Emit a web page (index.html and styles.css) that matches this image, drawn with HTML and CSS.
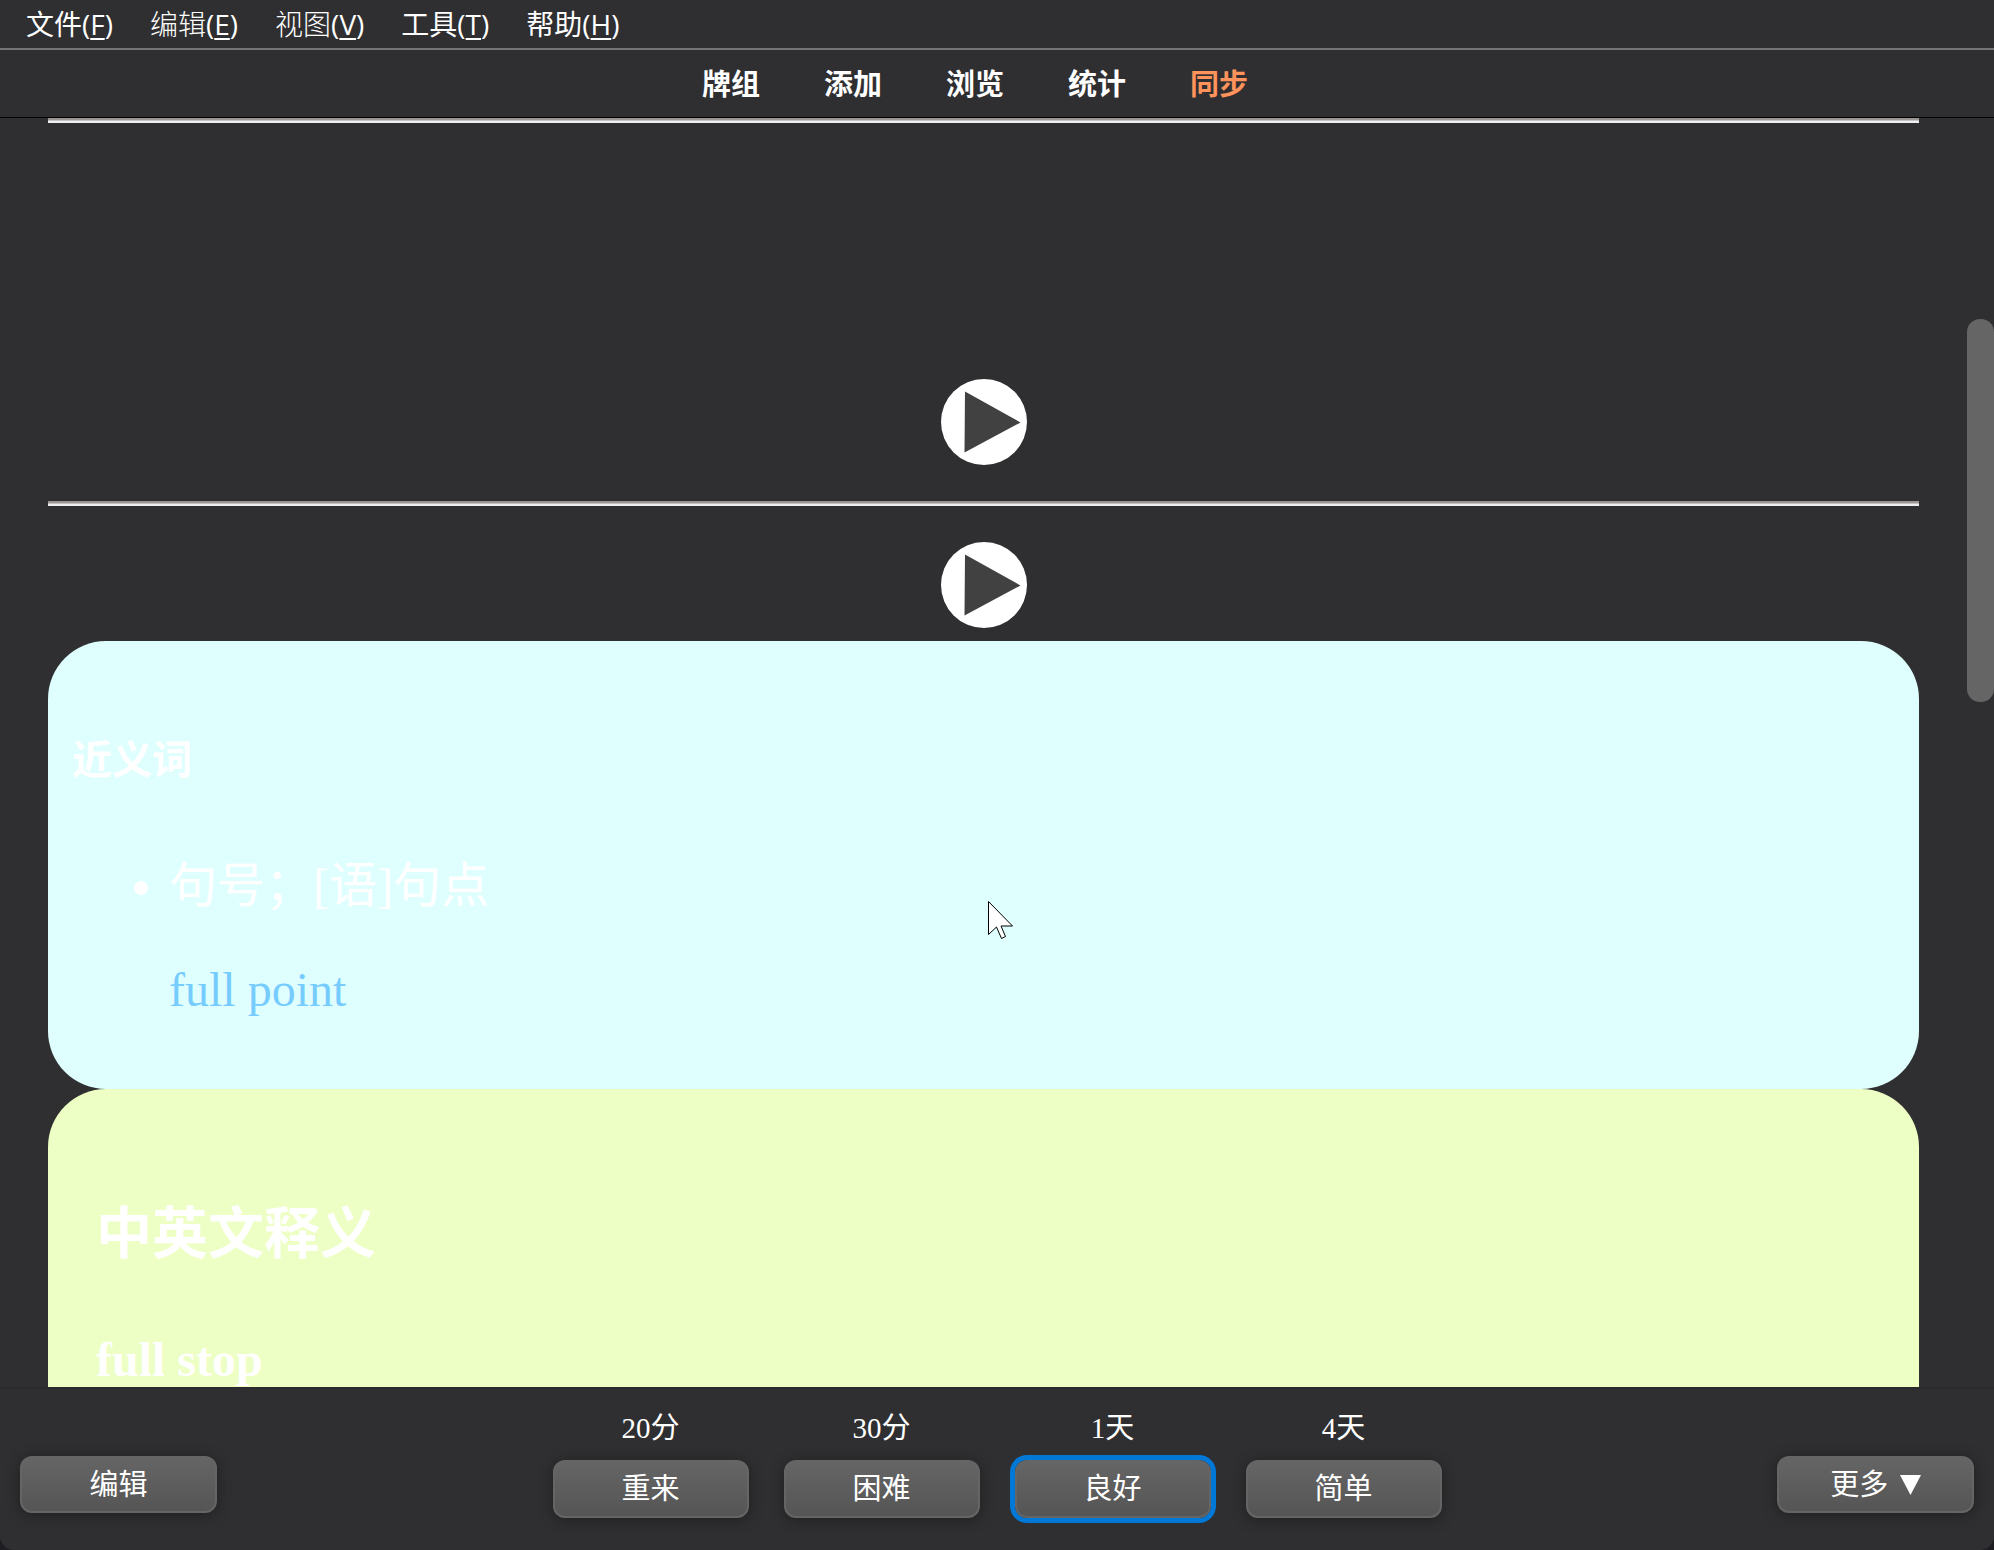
FILE: index.html
```html
<!DOCTYPE html>
<html lang="zh-CN">
<head>
<meta charset="utf-8">
<title>Anki</title>
<link rel="stylesheet" href="styles.css">
</head>
<body>
<div class="app">
  <nav class="menubar">
    <button type="button" class="menu">文件(<u>F</u>)</button>
    <button type="button" class="menu"><span class="light">编辑</span>(<u>E</u>)</button>
    <button type="button" class="menu"><span class="light">视图</span>(<u>V</u>)</button>
    <button type="button" class="menu">工具(<u>T</u>)</button>
    <button type="button" class="menu">帮助(<u>H</u>)</button>
  </nav>
  <nav class="toolbar">
    <a href="#decks">牌组</a>
    <a href="#add">添加</a>
    <a href="#browse">浏览</a>
    <a href="#stats">统计</a>
    <a href="#sync" class="sync">同步</a>
  </nav>
  <div class="viewport">
    <main class="card">
      <hr class="rule">
      <div class="audio audio-word">
        <button type="button" class="play" aria-label="播放单词">
          <svg viewBox="0 0 86 86"><circle cx="43" cy="43" r="43" fill="#fff"/><path d="M24 12.5 79.500 43.500 23.500 73.500Z" fill="#414141"/></svg>
        </button>
      </div>
      <hr class="rule">
      <div class="audio audio-example">
        <button type="button" class="play" aria-label="播放例句">
          <svg viewBox="0 0 86 86"><circle cx="43" cy="43" r="43" fill="#fff"/><path d="M24 12.5 79.500 43.500 23.500 73.500Z" fill="#414141"/></svg>
        </button>
      </div>
      <section class="panel synonyms">
        <h5>近义词</h5>
        <ul>
          <li>句号；[语]句点
            <p><a href="#full-point">full point</a></p>
          </li>
        </ul>
      </section>
      <section class="panel meanings">
        <h3>中英文释义</h3>
        <h4>full stop</h4>
      </section>
    </main>
    <div class="track"><div class="thumb"></div></div>
  </div>
  <footer class="bottom">
    <div class="side"><button type="button" class="btn">编辑</button></div>
    <div class="answers">
      <div class="answer"><span class="due">20分</span><button type="button" class="btn">重来</button></div>
      <div class="answer"><span class="due">30分</span><button type="button" class="btn">困难</button></div>
      <div class="answer"><span class="due">1天</span><button type="button" class="btn btn-focus">良好</button></div>
      <div class="answer"><span class="due">4天</span><button type="button" class="btn">简单</button></div>
    </div>
    <div class="side side-end"><button type="button" class="btn">更多 <svg class="caret" viewBox="0 0 21 20"><path d="M0 0H21L10.500 20Z" fill="#fff"/></svg></button></div>
  </footer>
  <svg class="cursor" viewBox="0 0 26 39"><path d="M.5 .5V33.500L8.500 26 13.500 37.500 17.500 35.500 13 25H24.500Z" fill="#fff" stroke="#000"/></svg>
</div>
</body>
</html>
```
FILE: styles.css
```css
* { box-sizing: border-box; }

body {
  margin: 0;
  background: #1d1d22;
}

button {
  margin: 0;
  border: 0;
  padding: 0;
  background: none;
  color: inherit;
  font: inherit;
}

.app {
  position: relative;
  display: flex;
  flex-direction: column;
  height: 100vh;
  overflow: hidden;
  border-radius: 0 0 14px 14px;
  background: #2f2f31;
  color: #fff;
  font-family: "Liberation Serif", "Noto Sans CJK SC", serif;
}

.menubar {
  display: flex;
  gap: 37px;
  height: 50px;
  padding-left: 26px;
  border-bottom: 2px solid #757577;
  font: 28px/48px "Open Sans", "Noto Sans CJK SC", sans-serif;
}

.light { font-weight: 300; }

.menu u {
  text-decoration-thickness: 2px;
  text-underline-offset: 3px;
}

.toolbar {
  display: flex;
  justify-content: center;
  gap: 64px;
  height: 68px;
  padding-right: 44px;
  border-bottom: 1px solid #000;
  font: bold 29px/64px "Noto Sans CJK SC", sans-serif;
}

.toolbar a {
  color: #fff;
  text-decoration: none;
}

.toolbar .sync { color: #ff935b; }

.viewport {
  display: flex;
  flex: 1;
  min-height: 0;
}

.card {
  flex: 1;
  overflow: hidden;
  padding: 0 48px;
  font-size: 48px;
}

.rule {
  height: 5px;
  margin: 0;
  border: solid;
  border-width: 2px 0;
  border-color: #9a9696 #eee #eee;
  background: #c4c2c2;
}

.audio {
  display: flex;
  justify-content: center;
}

.audio-word { padding: 256px 0 36px; }
.audio-example { padding: 36px 0 13px; }

.play,
.play svg {
  display: block;
  width: 86px;
  height: 86px;
}

.panel {
  border-radius: 58px;
}

.synonyms {
  height: 448px;
  padding: 90px 24px 0;
  background: #dfffff;
}

.synonyms h5 {
  margin: 0 0 47px;
  font-size: 40px;
  line-height: 60px;
}

.synonyms ul {
  margin: 0;
  padding-left: 97px;
  line-height: 96px;
}

.synonyms p {
  margin: 8px 0 0;
}

.synonyms a {
  color: #77ccff;
  text-decoration: none;
}

.meanings {
  height: 600px;
  padding: 105px 48px 0;
  background: #edffc4;
}

.meanings h3 {
  margin: 0 0 46px;
  font-size: 56px;
  line-height: 80px;
}

.meanings h4 {
  margin: 0;
  font-size: 48px;
  line-height: 80px;
}

.track {
  width: 27px;
  padding-top: 201px;
}

.thumb {
  height: 383px;
  border-radius: 13px;
  background: #656565;
}

.bottom {
  display: grid;
  grid-template-columns: 1fr auto 1fr;
  align-items: end;
  padding: 19px 20px 32px;
  border-top: 2px solid #2b2b2d;
  font-size: 29px;
}

.side {
  display: flex;
  padding-bottom: 5px;
}

.side .btn {
  width: 197px;
  height: 57px;
}

.side-end { justify-content: flex-end; }

.answers {
  display: flex;
  gap: 35px;
}

.answer {
  display: flex;
  flex-direction: column;
  gap: 12px;
  text-align: center;
}

.due { line-height: 40px; }

.btn {
  width: 196px;
  height: 58px;
  border: 2px solid #656565;
  border-radius: 12px;
  background: linear-gradient(#656565, #555);
  box-shadow: 0 2px 14px rgba(0, 0, 0, 0.35);
  line-height: 54px;
}

.btn-focus {
  box-shadow: 0 0 0 5px #0078d7;
}

.caret {
  width: 21px;
  height: 20px;
  margin-left: 4px;
}

.cursor {
  position: absolute;
  top: 901px;
  left: 988px;
  width: 26px;
  height: 39px;
}
```
